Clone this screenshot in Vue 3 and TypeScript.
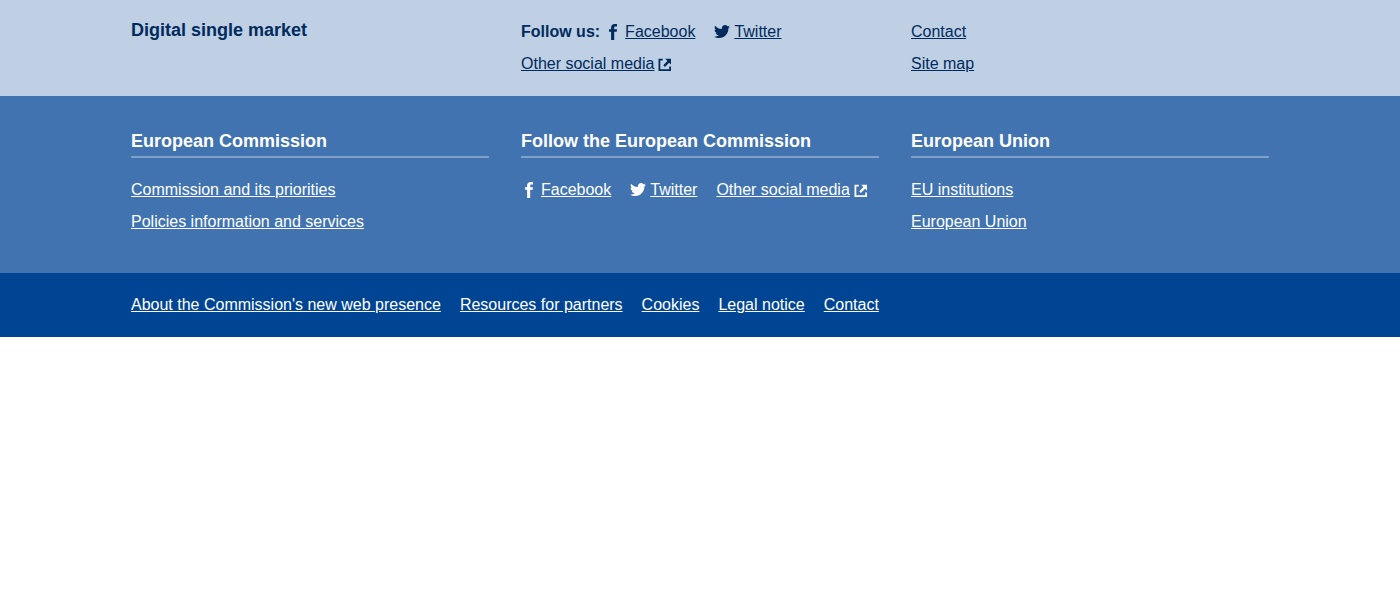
<script setup lang="ts">
import { h, type FunctionalComponent } from 'vue'

type IconName = 'facebook' | 'twitter' | 'external'

interface FooterLink {
  label: string
  icon?: IconName
}

const shapes: Record<IconName, string> = {
  facebook:
    'M12 .1V2.6H10.4C9.5 2.6 9.2 3 9.2 3.8V5.2H12L11.7 7.8H9.2V16H6.1V7.8H4V5.2H6.1V3.6C6.1 1.3 7.4 0 9.7 0C10.8 0 11.7 0 12 .1Z',
  twitter:
    'M16 2.7C15.4 3 14.8 3.2 14.1 3.3C14.8 2.9 15.3 2.2 15.6 1.4C14.9 1.8 14.3 2.1 13.5 2.2C12.9 1.5 12 1.1 11.1 1.1C9.3 1.1 7.8 2.6 7.8 4.4C7.8 4.7 7.8 4.9 7.9 5.1C5.2 5 2.7 3.7 1.1 1.7C.8 2.2 .7 2.8 .7 3.4C.7 4.5 1.2 5.5 2.1 6.1C1.6 6.1 1.1 5.9 .6 5.7C.6 7.3 1.8 8.7 3.3 9C2.8 9.1 2.3 9.1 1.8 9C2.2 10.3 3.4 11.3 4.9 11.3C3.5 12.3 1.8 12.9 0 12.7C1.5 13.6 3.2 14.1 5 14.1C11.1 14.1 14.4 9.1 14.4 4.8V4.4C15 3.9 15.6 3.3 16 2.7Z',
  external:
    'M.5 2.8H4.8V4.5H2.3V13.3H11.2V10.6H13V15H.5ZM7.2 2.8H13V8.6L11.1 6.7L6.9 10.9L5.3 9.3L9.4 5Z',
}

const Icon: FunctionalComponent<{ name: IconName }> = (props) =>
  h('svg', { viewBox: '0 0 16 16', 'aria-hidden': 'true' }, [
    h('path', { d: shapes[props.name], fill: 'currentColor' }),
  ])
Icon.props = ['name']

const social: FooterLink[] = [
  { label: 'Facebook', icon: 'facebook' },
  { label: 'Twitter', icon: 'twitter' },
  { label: 'Other social media', icon: 'external' },
]

const siteLinks: string[] = ['Contact', 'Site map']

const columns: { title: string; inline?: boolean; links: FooterLink[] }[] = [
  {
    title: 'European Commission',
    links: [
      { label: 'Commission and its priorities' },
      { label: 'Policies information and services' },
    ],
  },
  { title: 'Follow the European Commission', inline: true, links: social },
  {
    title: 'European Union',
    links: [{ label: 'EU institutions' }, { label: 'European Union' }],
  },
]

const legal: string[] = [
  "About the Commission's new web presence",
  'Resources for partners',
  'Cookies',
  'Legal notice',
  'Contact',
]
</script>

<template>
  <footer class="footer">
    <section class="band site">
      <div class="container grid">
        <h4 class="title">Digital single market</h4>
        <div class="row">
          <div class="follow">
            <strong>Follow us:</strong>
            <a href="#" class="link"><Icon name="facebook" class="icon" /><span>Facebook</span></a>
          </div>
          <a href="#" class="link"><Icon name="twitter" class="icon" /><span>Twitter</span></a>
          <a href="#" class="link"><span>Other social media</span><Icon name="external" class="icon" /></a>
        </div>
        <ul class="list">
          <li v-for="label in siteLinks" :key="label">
            <a href="#" class="link"><span>{{ label }}</span></a>
          </li>
        </ul>
      </div>
    </section>

    <section class="band corporate">
      <div class="container grid">
        <div v-for="column in columns" :key="column.title">
          <h4 class="title ruled">{{ column.title }}</h4>
          <ul :class="column.inline ? 'row' : 'list'">
            <li v-for="link in column.links" :key="link.label">
              <a href="#" class="link">
                <Icon v-if="link.icon && link.icon !== 'external'" :name="link.icon" class="icon" />
                <span>{{ link.label }}</span>
                <Icon v-if="link.icon === 'external'" name="external" class="icon" />
              </a>
            </li>
          </ul>
        </div>
      </div>
    </section>

    <section class="band legal">
      <div class="container">
        <ul class="row">
          <li v-for="label in legal" :key="label">
            <a href="#" class="link"><span>{{ label }}</span></a>
          </li>
        </ul>
      </div>
    </section>
  </footer>
</template>

<style>
body {
  margin: 0;
  background: #fff;
}
</style>

<style scoped>
.footer {
  font-family: "Liberation Sans", Arial, sans-serif;
  font-size: 16px;
  line-height: 32px;
}

.band {
  padding: 16px;
  color: #fff;
}

.site {
  background: #bfd0e4;
  color: #002b5c;
}

.corporate {
  padding-top: 32px;
  padding-bottom: 35px;
  background: #4073af;
}

.legal {
  background: #004494;
}

.container {
  max-width: 1138px;
  margin: 0 auto;
}

.grid {
  display: grid;
  grid-template-columns: repeat(3, minmax(0, 1fr));
  column-gap: 32px;
}

.title {
  margin: 0;
  font-size: 18px;
  font-weight: 700;
  line-height: 28px;
}

.ruled {
  margin-bottom: 16px;
  padding-bottom: 2px;
  border-bottom: 2px solid #7f9fc9;
  line-height: 26px;
}

.list,
.row {
  margin: 0;
  padding: 0;
  list-style: none;
}

.row {
  display: flex;
  flex-wrap: wrap;
  column-gap: 19px;
}

.follow {
  display: flex;
  column-gap: 5px;
}

.link {
  display: inline-flex;
  align-items: center;
  column-gap: 4px;
  height: 32px;
  color: inherit;
  text-decoration: none;
  vertical-align: top;
}

.link span {
  text-decoration: underline;
}

.icon {
  flex: none;
  width: 16px;
  height: 16px;
}
</style>
